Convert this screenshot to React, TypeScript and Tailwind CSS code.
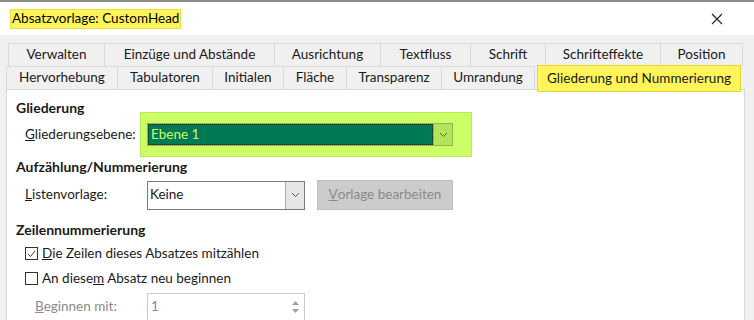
import React from "react";

const row1 = [
  { t: "Verwalten", w: 96 },
  { t: "Einzüge und Abstände", w: 170 },
  { t: "Ausrichtung", w: 106 },
  { t: "Textfluss", w: 90 },
  { t: "Schrift", w: 75 },
  { t: "Schrifteffekte", w: 115 },
  { t: "Position", w: 83 },
];
const row2 = [
  { t: "Hervorhebung", w: 111 },
  { t: "Tabulatoren", w: 95 },
  { t: "Initialen", w: 71 },
  { t: "Fläche", w: 63 },
  { t: "Transparenz", w: 95 },
  { t: "Umrandung", w: 93 },
];

function Chevron({ color = "#555" }: { color?: string }) {
  return (
    <svg width="9" height="6" viewBox="0 0 9 6">
      <path d="M1 1 L4.5 4.5 L8 1" fill="none" stroke={color} strokeWidth="1" />
    </svg>
  );
}

export default function App() {
  return (
    <div
      className="w-[754px] h-[320px] overflow-hidden bg-[#f0f0f0] text-[13.5px] text-[#1a1a1a] relative whitespace-nowrap"
      style={{ fontFamily: 'Lato, "Noto Sans", sans-serif' }}
    >
      <div className="h-[2px] bg-[#8c8c8c]" />
      <div className="h-[33px] bg-white flex items-center justify-between pl-[10px] pr-[31px]">
        <span className="bg-[#fff55a] border border-[#f0dc3a] h-[20px] px-[1px] flex items-center leading-none text-[13.5px] text-black">
          Absatzvorlage: CustomHead
        </span>
        <svg width="12" height="12" viewBox="0 0 12 12">
          <path d="M1 1 L11 11 M11 1 L1 11" stroke="#222" strokeWidth="1.1" />
        </svg>
      </div>
      <div className="h-[8px]" />
      <div className="flex pl-[8px]">
        {row1.map((r) => (
          <div
            key={r.t}
            className="h-[23px] shrink-0 border-t border-l border-[#d9d9d9] last:border-r bg-[#f0f0f0] flex items-center justify-center leading-none"
            style={{ width: r.w }}
          >
            {r.t}
          </div>
        ))}
      </div>
      <div className="flex pl-[6px] h-[23px] items-start relative z-10">
        {row2.map((r) => (
          <div
            key={r.t}
            className="h-[23px] shrink-0 border-t border-l border-[#d9d9d9] bg-[#f0f0f0] flex items-center justify-center leading-none"
            style={{ width: r.w }}
          >
            {r.t}
          </div>
        ))}
        <div className="w-[3px] shrink-0 h-[23px] border-l border-[#d9d9d9]" />
        <div className="w-[204px] shrink-0 h-[27px] -mt-[1px] bg-[#fff55a] border border-[#e8d33a] flex items-center justify-center leading-none">
          Gliederung und Nummerierung
        </div>
      </div>
      <div className="ml-[6px] w-[739px] h-[240px] bg-white border-l border-t border-r border-[#d9d9d9] pl-[9px] pt-[9px]">
        <div className="font-bold text-[14px] h-[18px] flex items-center leading-none">Gliederung</div>
        <div className="flex items-center h-[45px] -mt-[5px]">
          <div className="w-[124px] shrink-0 pl-[9px] leading-none">
            <u>G</u>liederungsebene:
          </div>
          <div className="w-[332px] shrink-0 h-[45px] bg-[#ccff66] border border-[#b8e85c] flex items-center pl-[6px]">
            <div className="w-[306px] h-[23px] flex border border-[#8fb84a]">
              <div className="flex-1 bg-[#007a55] border border-dotted border-[#222] flex items-center pl-[2px] text-[#c8ff66] leading-none">
                Ebene 1
              </div>
              <div className="w-[19px] bg-[#b5e35a] border-l border-[#8fb84a] flex items-center justify-center">
                <Chevron color="#4a6a20" />
              </div>
            </div>
          </div>
        </div>
        <div className="font-bold text-[14px] h-[20px] flex items-center leading-none">Aufzählung/Nummerierung</div>
        <div className="flex items-center h-[30px] mt-[3px]">
          <div className="w-[131px] shrink-0 pl-[9px] leading-none">
            <u>L</u>istenvorlage:
          </div>
          <div className="w-[158px] shrink-0 h-[29px] flex border border-[#7a7a7a] bg-white">
            <div className="flex-1 flex items-center pl-[2px] leading-none">Keine</div>
            <div className="w-[19px] bg-[#e6e6e6] border-l border-[#adadad] flex items-center justify-center">
              <Chevron />
            </div>
          </div>
          <div className="ml-[12px] shrink-0 w-[136px] h-[30px] bg-[#cccccc] border border-[#bfbfbf] flex items-center justify-center text-[#8a8a8a] leading-none">
            <u>V</u>orlage bearbeiten
          </div>
        </div>
        <div className="font-bold text-[14px] h-[22px] flex items-center leading-none mt-[9px]">Zeilennummerierung</div>
        <div className="flex items-center h-[25px] pl-[9px] leading-none">
          <div className="w-[13px] h-[13px] border border-[#333] flex items-center justify-center mr-[4px]">
            <svg width="9" height="8" viewBox="0 0 9 8">
              <path d="M1 4 L3.5 6.5 L8 1" fill="none" stroke="#333" strokeWidth="1" />
            </svg>
          </div>
          <span>
            <u>D</u>ie Zeilen dieses Absatzes mitzählen
          </span>
        </div>
        <div className="flex items-center h-[25px] pl-[9px] leading-none">
          <div className="w-[13px] h-[13px] border border-[#333] mr-[4px]" />
          <span>
            An diese<u>m</u> Absatz neu beginnen
          </span>
        </div>
        <div className="flex items-center h-[28px] mt-[2px]">
          <div className="w-[131px] shrink-0 pl-[19px] leading-none text-[#8a8a8a]">
            <u>B</u>eginnen mit:
          </div>
          <div className="w-[158px] shrink-0 h-[28px] flex border border-[#cccccc] bg-white">
            <div className="flex-1 flex items-center pl-[3px] text-[#8a8a8a] leading-none">1</div>
            <div className="w-[17px] flex flex-col items-center justify-center gap-[4px]">
              <svg width="7" height="4" viewBox="0 0 7 4"><path d="M0 4 L3.5 0 L7 4Z" fill="#a0a0a0" /></svg>
              <svg width="7" height="4" viewBox="0 0 7 4"><path d="M0 0 L3.5 4 L7 0Z" fill="#a0a0a0" /></svg>
            </div>
          </div>
        </div>
      </div>
    </div>
  );
}
